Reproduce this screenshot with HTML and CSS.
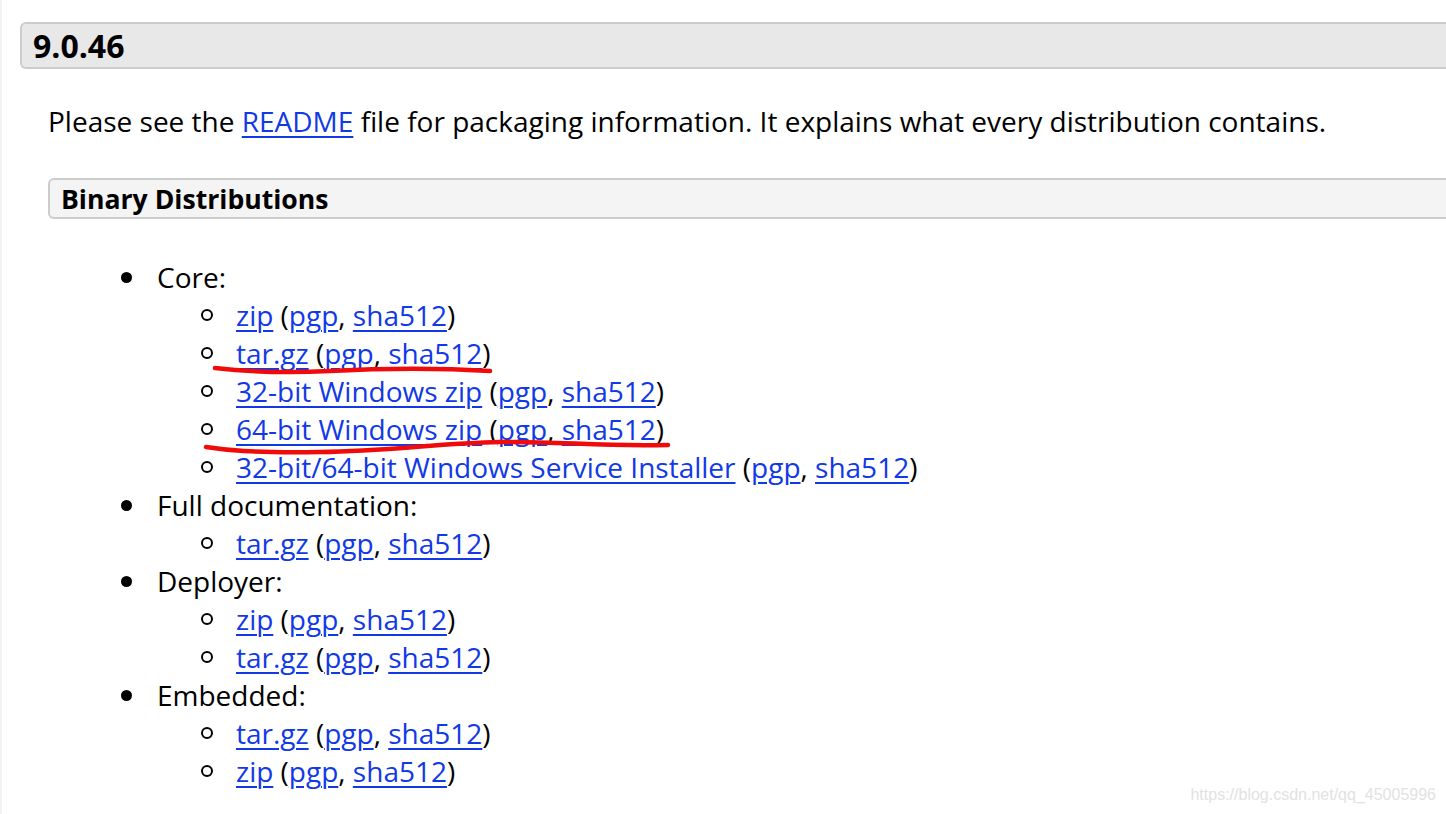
FILE: index.html
```html
<!DOCTYPE html>
<html>
<head>
<meta charset="utf-8">
<link rel="stylesheet" href="styles.css">
</head>
<body>
<div class="page">
  <div class="release">
    <h3 class="release-title">9.0.46</h3>
    <div class="release-body">
      <p class="intro">Please see the <a href="#">README</a> file for packaging information. It explains what every distribution contains.</p>
      <h4 class="dist-title">Binary Distributions</h4>
      <ul class="dist-list">
        <li>Core:
          <ul>
            <li><a href="#">zip</a> (<a href="#">pgp</a>, <a href="#">sha512</a>)</li>
            <li><a href="#">tar.gz</a> (<a href="#">pgp</a>, <a href="#">sha512</a>)</li>
            <li><a href="#">32-bit Windows zip</a> (<a href="#">pgp</a>, <a href="#">sha512</a>)</li>
            <li><a href="#">64-bit Windows zip</a> (<a href="#">pgp</a>, <a href="#">sha512</a>)</li>
            <li><a href="#">32-bit/64-bit Windows Service Installer</a> (<a href="#">pgp</a>, <a href="#">sha512</a>)</li>
          </ul>
        </li>
        <li>Full documentation:
          <ul>
            <li><a href="#">tar.gz</a> (<a href="#">pgp</a>, <a href="#">sha512</a>)</li>
          </ul>
        </li>
        <li>Deployer:
          <ul>
            <li><a href="#">zip</a> (<a href="#">pgp</a>, <a href="#">sha512</a>)</li>
            <li><a href="#">tar.gz</a> (<a href="#">pgp</a>, <a href="#">sha512</a>)</li>
          </ul>
        </li>
        <li>Embedded:
          <ul>
            <li><a href="#">tar.gz</a> (<a href="#">pgp</a>, <a href="#">sha512</a>)</li>
            <li><a href="#">zip</a> (<a href="#">pgp</a>, <a href="#">sha512</a>)</li>
          </ul>
        </li>
      </ul>
    </div>
  </div>
</div>
<svg class="marks" width="1446" height="814" viewBox="0 0 1446 814">
  <path d="M215 368 C 250 372, 290 373, 330 371 S 420 367, 490 371" />
  <path d="M206 447 C 225 450, 250 453, 320 452 S 440 443, 500 442 S 600 447, 668 445" />
</svg>
<div class="watermark">https://blog.csdn.net/qq_45005996</div>
</body>
</html>
```

FILE: styles.css
```css
html, body {
  margin: 0;
  padding: 0;
  background: #ffffff;
  overflow: hidden;
}
body {
  width: 1446px;
  height: 814px;
  position: relative;
  font-family: "Open Sans", "Noto Sans", sans-serif;
  font-size: 28px;
  line-height: 38px;
  color: #000;
  border-left: 2px solid #f2f2f2;
  box-sizing: border-box;
}
.page {
  padding: 22px 0 0 18px;
}
.release-title {
  margin: 0;
  background: #e8e8e8;
  border: 2px solid #cccccc;
  border-right: none;
  border-radius: 6px 0 0 6px;
  font-size: 32px;
  font-weight: 700;
  line-height: 43px;
  padding: 0 0 0 11px;
}
.release-body {
  padding-left: 28px;
}
.intro {
  margin: 33px 0 38px 0;
}
a {
  color: #1239e6;
  text-decoration: underline;
  text-decoration-thickness: 2px;
  text-underline-offset: 4px;
}
.dist-title {
  margin: 0;
  background: #f4f4f4;
  border: 2px solid #cccccc;
  border-right: none;
  border-radius: 6px 0 0 6px;
  font-size: 26.6px;
  font-weight: 700;
  line-height: 35px;
  padding: 2px 0 0 11px;
}
.dist-list {
  margin: 39px 0 0 0;
  padding-left: 109px;
  list-style: none;
}
.dist-list ul {
  margin: 0;
  padding-left: 79px;
  list-style: none;
}
.dist-list li {
  position: relative;
}
.dist-list > li::before {
  content: "";
  position: absolute;
  left: -36px;
  top: 14px;
  width: 11px;
  height: 11px;
  border-radius: 50%;
  background: #000;
}
.dist-list ul > li::before {
  content: "";
  position: absolute;
  left: -35px;
  top: 13px;
  width: 12px;
  height: 12px;
  box-sizing: border-box;
  border-radius: 50%;
  border: 2.5px solid #000;
  background: transparent;
}
.marks {
  position: absolute;
  left: -2px;
  top: 0;
  pointer-events: none;
}
.marks path {
  fill: none;
  stroke: #f00a0a;
  stroke-width: 4.5;
  stroke-linecap: round;
}
.watermark {
  position: absolute;
  right: 10px;
  bottom: 9px;
  font-family: "Liberation Sans", Arial, sans-serif;
  font-size: 16px;
  line-height: 20px;
  color: #e2e2e2;
}
```
